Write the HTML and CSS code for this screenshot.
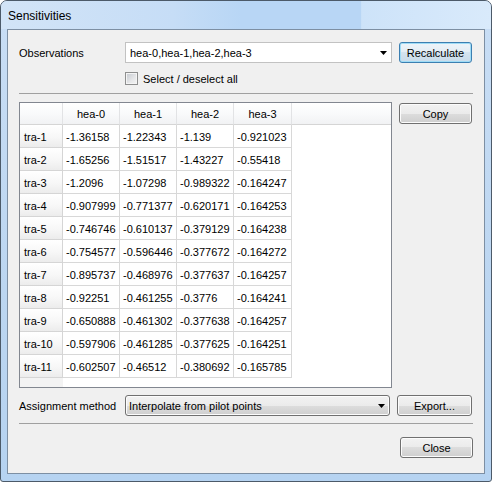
FILE: index.html
```html
<!DOCTYPE html>
<html>
<head>
<meta charset="utf-8">
<link rel="stylesheet" href="styles.css">
</head>
<body>
<div class="window">
  <div class="titlebar"><span class="title">Sensitivities</span></div>
  <div class="client">
    <div class="row r-obs">
      <span class="lbl">Observations</span>
      <div class="combo edit"><span class="combo-text">hea-0,hea-1,hea-2,hea-3</span><svg class="arrow" width="7" height="4" viewBox="0 0 7 4"><polygon points="0,0 7,0 3.5,4" fill="#000"/></svg></div>
      <button class="btn default w-recalc">Recalculate</button>
    </div>
    <div class="row r-check">
      <span class="checkbox"></span><span class="check-lbl">Select / deselect all</span>
    </div>
    <div class="sep s1"></div>
    <div class="row r-table">
      <div class="grid">
        <div class="hc corner"></div><div class="hc">hea-0</div><div class="hc">hea-1</div><div class="hc">hea-2</div><div class="hc">hea-3</div><div class="hc filler"></div>
        <div class="rh">tra-1</div><div class="c">-1.36158</div><div class="c">-1.22343</div><div class="c">-1.139</div><div class="c">-0.921023</div><div class="e"></div>
        <div class="rh">tra-2</div><div class="c">-1.65256</div><div class="c">-1.51517</div><div class="c">-1.43227</div><div class="c">-0.55418</div><div class="e"></div>
        <div class="rh">tra-3</div><div class="c">-1.2096</div><div class="c">-1.07298</div><div class="c">-0.989322</div><div class="c">-0.164247</div><div class="e"></div>
        <div class="rh">tra-4</div><div class="c">-0.907999</div><div class="c">-0.771377</div><div class="c">-0.620171</div><div class="c">-0.164253</div><div class="e"></div>
        <div class="rh">tra-5</div><div class="c">-0.746746</div><div class="c">-0.610137</div><div class="c">-0.379129</div><div class="c">-0.164238</div><div class="e"></div>
        <div class="rh">tra-6</div><div class="c">-0.754577</div><div class="c">-0.596446</div><div class="c">-0.377672</div><div class="c">-0.164272</div><div class="e"></div>
        <div class="rh">tra-7</div><div class="c">-0.895737</div><div class="c">-0.468976</div><div class="c">-0.377637</div><div class="c">-0.164257</div><div class="e"></div>
        <div class="rh">tra-8</div><div class="c">-0.92251</div><div class="c">-0.461255</div><div class="c">-0.3776</div><div class="c">-0.164241</div><div class="e"></div>
        <div class="rh">tra-9</div><div class="c">-0.650888</div><div class="c">-0.461302</div><div class="c">-0.377638</div><div class="c">-0.164257</div><div class="e"></div>
        <div class="rh">tra-10</div><div class="c">-0.597906</div><div class="c">-0.461285</div><div class="c">-0.377625</div><div class="c">-0.164251</div><div class="e"></div>
        <div class="rh">tra-11</div><div class="c">-0.602507</div><div class="c">-0.46512</div><div class="c">-0.380692</div><div class="c">-0.165785</div><div class="e"></div>
        <div class="rh-fill"></div><div class="e rest"></div>
      </div>
      <button class="btn w-copy">Copy</button>
    </div>
    <div class="row r-assign">
      <span class="lbl">Assignment method</span>
      <div class="combo ro"><span class="combo-text">Interpolate from pilot points</span><svg class="arrow" width="7" height="4" viewBox="0 0 7 4"><polygon points="0,0 7,0 3.5,4" fill="#000"/></svg></div>
      <button class="btn w-export">Export...</button>
    </div>
    <div class="sep s2"></div>
    <div class="row r-close">
      <button class="btn w-close">Close</button>
    </div>
  </div>
</div>
</body>
</html>
```
FILE: styles.css
```css
html, body {
  margin: 0;
  padding: 0;
  background: #ffffff;
}
body {
  font-family: "Liberation Sans", Arial, sans-serif;
  font-size: 11px;
  color: #000;
}
.window {
  width: 492px;
  height: 482px;
  box-sizing: border-box;
  border: 1px solid #4c5a69;
  border-radius: 7px 7px 3px 3px;
  background: linear-gradient(to bottom, #c9def5 0%, #bcd6f1 60%, #b6d3f1 100%);
  display: flex;
  flex-direction: column;
  overflow: hidden;
}
.titlebar {
  height: 28px;
  flex: none;
  display: flex;
  align-items: center;
  padding-left: 7px;
  background: linear-gradient(to right, #d2e4f7 0%, #c6ddf6 35%, #b8d6f5 49%, #b8d6f5 73.4%, #cde3f9 73.6%, #d9eafb 100%);
}
.title {
  font-size: 12px;
  padding-top: 2px;
}
.client {
  margin: 0 6px 7px 6px;
  height: 445px;
  box-sizing: border-box;
  border: 1px solid #7d8fa3;
  background: #f0f0f0;
  padding: 12px 11px 0 11px;
}
.row {
  display: flex;
  align-items: center;
}
.lbl {
  width: 106px;
  flex: none;
}
.r-obs, .r-assign {
  height: 21px;
}
.combo {
  box-sizing: border-box;
  height: 21px;
  flex: none;
  display: flex;
  align-items: center;
}
.combo .arrow {
  margin-left: auto;
  flex: none;
}
.combo.edit {
  width: 267px;
  background: #fff;
  border: 1px solid #c2c2c2;
  padding-left: 4px;
}
.combo.edit .arrow {
  margin-right: 4px;
}
.combo.ro {
  width: 265px;
  border: 1px solid #707070;
  border-radius: 3px;
  background: linear-gradient(#f2f2f2 0%, #ebebeb 50%, #dddddd 50%, #cfcfcf 100%);
  box-shadow: inset 0 0 0 1px #fcfcfc;
  padding-left: 3px;
}
.combo.ro .arrow {
  margin-right: 4px;
}
.btn {
  box-sizing: border-box;
  height: 21px;
  flex: none;
  font: inherit;
  color: #000;
  margin: 0;
  padding: 0;
  border: 1px solid #707070;
  border-radius: 3px;
  background: linear-gradient(#f2f2f2 0%, #ebebeb 50%, #dddddd 50%, #cfcfcf 100%);
  box-shadow: inset 0 0 0 1px #fcfcfc;
}
.btn.default {
  border-color: #3c7fb1;
  background: linear-gradient(#eef4f9 0%, #e3edf5 50%, #d4e3ef 50%, #c9dbea 100%);
  box-shadow: inset 0 0 0 1px #9fdcf6;
}
.w-recalc {
  width: 73px;
  margin-left: 7px;
}
.w-copy {
  width: 73px;
  margin-left: 7px;
  margin-top: 1px;
}
.w-export {
  width: 75px;
  margin-left: 7px;
}
.w-close {
  width: 73px;
  margin-left: auto;
}
.r-check {
  margin-top: 9px;
  height: 13px;
  padding-left: 106px;
}
.checkbox {
  width: 13px;
  height: 13px;
  box-sizing: border-box;
  border: 1px solid #8e8f8f;
  background: linear-gradient(135deg, #c4c8ce 0%, #e6e7e9 60%, #f4f4f4 100%);
  box-shadow: inset 0 0 0 1px #f4f4f4;
  flex: none;
}
.check-lbl {
  margin-left: 5px;
}
.sep {
  height: 1px;
  background: #a0a0a0;
}
.s1 {
  margin-top: 8px;
}
.s2 {
  margin-top: 7px;
}
.r-table {
  margin-top: 8px;
  align-items: flex-start;
}
.r-assign {
  margin-top: 7px;
}
.r-close {
  margin-top: 13px;
}
.grid {
  width: 373px;
  height: 286px;
  box-sizing: border-box;
  border: 1px solid #828790;
  background: #fff;
  display: grid;
  grid-template-columns: 43px 57px 57px 57px 58px 1fr;
  grid-template-rows: 22px repeat(11, 23px) 1fr;
  flex: none;
}
.hc {
  box-sizing: border-box;
  border-right: 1px solid #e2e3e5;
  border-bottom: 1px solid #d5d5d5;
  background: linear-gradient(#ffffff 0%, #f9fafb 50%, #f1f2f4 100%);
  display: flex;
  align-items: center;
  justify-content: center;
  padding-top: 1px;
}
.hc.filler {
  border-right: none;
}
.rh {
  box-sizing: border-box;
  border-right: 1px solid #d5d5d5;
  border-bottom: 1px solid #d5d5d5;
  background: linear-gradient(#ffffff 0%, #f7f7f7 55%, #ececec 100%);
  display: flex;
  align-items: center;
  padding-left: 4px;
  padding-top: 1px;
}
.c {
  box-sizing: border-box;
  border-right: 1px solid #d8d8d8;
  border-bottom: 1px solid #d8d8d8;
  display: flex;
  align-items: center;
  padding-left: 3px;
  padding-top: 1px;
  white-space: nowrap;
}
.rh-fill {
  background: #f3f3f3;
}
.rest {
  grid-column: 2 / 7;
}
```
